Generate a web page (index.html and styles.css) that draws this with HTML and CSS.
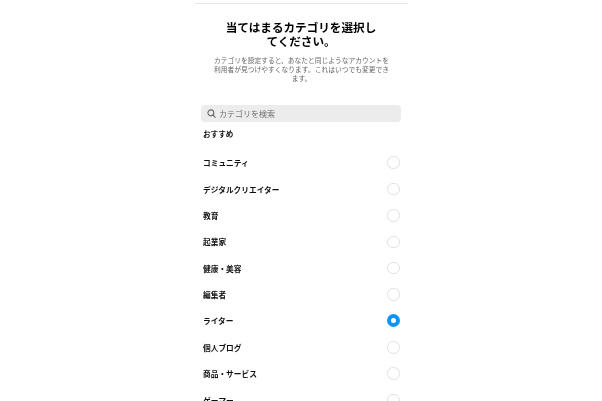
FILE: index.html
```html
<!DOCTYPE html>
<html lang="ja">
<head>
<meta charset="utf-8">
<title>カテゴリを選択</title>
<link rel="stylesheet" href="styles.css">
</head>
<body>
<main class="panel">
  <div class="topline"></div>
  <h1 class="title">当てはまるカテゴリを選択し<br>てください。</h1>
  <p class="desc">カテゴリを設定すると、あなたと同じようなアカウントを<br>利用者が見つけやすくなります。これはいつでも変更でき<br>ます。</p>
  <div class="search">
    <svg class="search-icon" viewBox="0 0 10 10" width="9" height="9"><circle cx="4.3" cy="4.3" r="3.3" fill="none" stroke="#666" stroke-width="1.2"/><path d="M6.8 6.8 9.2 9.2" stroke="#666" stroke-width="1.2" stroke-linecap="round"/></svg>
    <span class="search-text">カテゴリを検索</span>
  </div>
  <h2 class="section">おすすめ</h2>
  <ul class="list">
    <li class="row"><span>コミュニティ</span><i class="radio"></i></li>
    <li class="row"><span>デジタルクリエイター</span><i class="radio"></i></li>
    <li class="row"><span>教育</span><i class="radio"></i></li>
    <li class="row"><span>起業家</span><i class="radio"></i></li>
    <li class="row"><span>健康・美容</span><i class="radio"></i></li>
    <li class="row"><span>編集者</span><i class="radio"></i></li>
    <li class="row"><span>ライター</span><i class="radio on"></i></li>
    <li class="row"><span>個人ブログ</span><i class="radio"></i></li>
    <li class="row"><span>商品・サービス</span><i class="radio"></i></li>
    <li class="row"><span>ゲーマー</span><i class="radio"></i></li>
  </ul>
</main>
</body>
</html>
```
FILE: styles.css
```css
html, body { margin: 0; padding: 0; height: 401px; overflow: hidden; background: #fff; }
body { font-family: "Noto Sans CJK JP", "Noto Sans", sans-serif; color: #111; }
.panel { width: 213px; margin-left: 195px; display: flex; flex-direction: column; filter: blur(0.5px); }
.topline { height: 1px; margin-top: 3px; background: #e8e8e8; }
.title { margin: 16px 0 0; padding-right: 1px; font-size: 11.6px; line-height: 14.4px; font-weight: 700; text-align: center; color: #000; }
.desc { margin: 7.5px 17px 0; font-size: 6.75px; line-height: 8.7px; text-align: center; color: #666; white-space: nowrap; }
.search { margin: 22.5px 7px 0 6px; height: 17px; border-radius: 4px; background: #ececec; display: flex; align-items: center; gap: 3px; padding-left: 6px; }
.search-icon { flex: none; }
.search-text { font-size: 8px; color: #707070; }
.section { margin: 6.5px 8px 0; font-size: 7.6px; line-height: 12px; font-weight: 700; color: #111; }
.list { list-style: none; margin: 9px 8px 0; padding: 0; }
.row { height: 26.4px; display: flex; align-items: center; justify-content: space-between; font-size: 7.7px; font-weight: 700; color: #111; }
.radio { width: 10.5px; height: 10.5px; border: 1.3px solid #e0e0e0; border-radius: 50%; margin-right: 0.5px; flex: none; }
.radio.on { border: 4px solid #0d95f6; width: 5px; height: 5px; background: #fff; }
```
